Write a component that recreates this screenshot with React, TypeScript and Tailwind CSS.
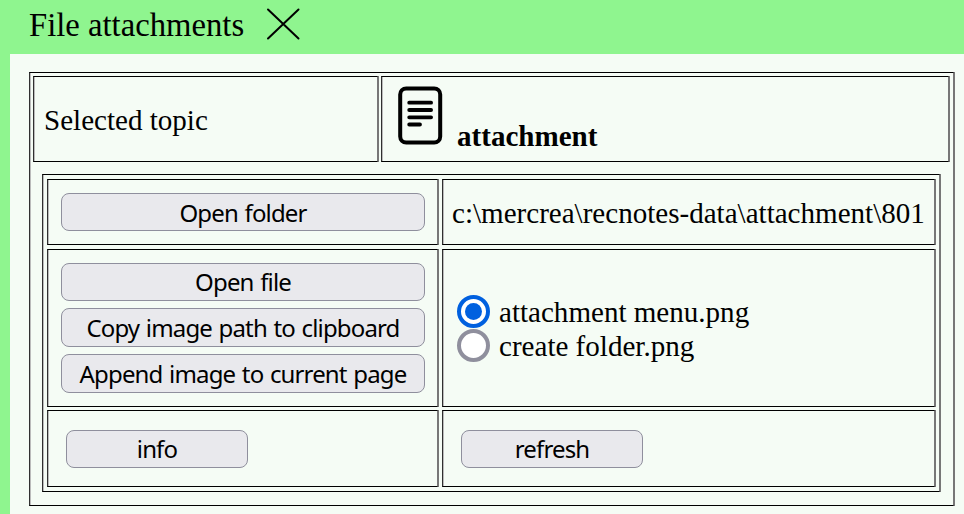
import type { ReactNode } from "react";

function Button({ children, className = "" }: { children: ReactNode; className?: string }) {
  return (
    <button
      className={`flex items-center justify-center whitespace-nowrap rounded-[8px] border border-[#8f8f9d] bg-[#e9e9ed] font-['Noto_Sans',sans-serif] text-[24px] leading-none tracking-[-0.85px] [word-spacing:1.2px] text-black ${className}`}
    >
      {children}
    </button>
  );
}

function Radio({ checked, label }: { checked: boolean; label: string }) {
  return (
    <label className="flex h-[34px] items-center">
      <span
        className={`flex size-[33px] shrink-0 items-center justify-center rounded-full border-4 bg-white ${checked ? "border-[#0060df]" : "border-[#8f8f9d]"}`}
      >
        {checked && <span className="size-[17px] rounded-full bg-[#0060df]" />}
      </span>
      <span className="ml-[9px] whitespace-nowrap pt-[3px]">{label}</span>
    </label>
  );
}

const frame = "border border-black border-l-[#303030] border-r-[#777] shadow-[1px_0_0_#777,inset_1px_0_0_#bbb]";

export default function App() {
  return (
    <div className="flex h-[514px] w-[964px] flex-col overflow-hidden bg-[#f5fcf5] font-['Liberation_Serif',serif] text-[29.07px] leading-none text-black">
      <header className="flex h-[54px] shrink-0 items-center bg-[#8ff58f] pl-[29px]">
        <h1 className="w-[237px] whitespace-nowrap pb-[3px] text-[32.7px] leading-none">File attachments</h1>
        <svg width="34" height="32" viewBox="0 0 34 32" className="mb-[7px]" fill="none" stroke="black" strokeWidth="2" strokeLinecap="round">
          <path d="M2 1.5 32.5 30.5M32.5 1.5 2 30.5" />
        </svg>
      </header>
      <main className="flex-1 border-l-[10px] border-[#8ff58f] pl-[19px] pt-[18px]">
        <section className={`h-[434px] w-[925px] p-[3px] ${frame}`}>
          <div className="flex h-[86px] gap-[3px]">
            <div className={`flex w-[345px] items-center pl-[10px] ${frame}`}>
              <span className="whitespace-nowrap pt-[3px]">Selected topic</span>
            </div>
            <div className={`flex w-[568px] items-start pl-[15px] ${frame}`}>
              <svg width="46" height="60" viewBox="0 0 46 60" className="mt-[9px]" fill="none" stroke="black" strokeLinecap="round">
                <rect x="3.2" y="2.5" width="40" height="54" rx="6" strokeWidth="4" />
                <path d="M12.2 16.7H34.1M12.2 24H34.1M12.2 31.3H34.1M12.2 38.5H23" strokeWidth="3.8" />
              </svg>
              <b className="ml-[14px] mt-[45px] whitespace-nowrap">attachment</b>
            </div>
          </div>
          <div className={`ml-[9px] mt-[12px] flex h-[318px] w-[898px] flex-col p-[4px] ${frame}`}>
            <div className="flex h-[66px] gap-[4px]">
              <div className={`w-[391px] pl-[13px] pt-[13px] ${frame}`}>
                <Button className="h-[38px] w-[364px] pt-px">Open folder</Button>
              </div>
              <div className={`flex w-[493px] items-center pl-[9px] ${frame}`}>
                <span className="whitespace-nowrap pt-[3px]">c:\mercrea\recnotes-data\attachment\801</span>
              </div>
            </div>
            <div className="mt-[4px] flex h-[158px] gap-[4px]">
              <div className={`flex w-[391px] flex-col gap-[7px] pl-[13px] pt-[13px] ${frame}`}>
                <Button className="h-[38px] w-[364px]">Open file</Button>
                <Button className="h-[39px] w-[364px]">Copy image path to clipboard</Button>
                <Button className="h-[39px] w-[364px]">Append image to current page</Button>
              </div>
              <div className={`flex w-[493px] flex-col justify-center pl-[14px] ${frame}`}>
                <Radio checked label="attachment menu.png" />
                <Radio checked={false} label="create folder.png" />
              </div>
            </div>
            <div className="mt-[3px] flex h-[77px] gap-[4px]">
              <div className={`w-[391px] pl-[18px] pt-[19px] ${frame}`}>
                <Button className="h-[38px] w-[182px]">info</Button>
              </div>
              <div className={`w-[493px] pl-[18px] pt-[19px] ${frame}`}>
                <Button className="h-[38px] w-[182px]">refresh</Button>
              </div>
            </div>
          </div>
        </section>
      </main>
    </div>
  );
}
